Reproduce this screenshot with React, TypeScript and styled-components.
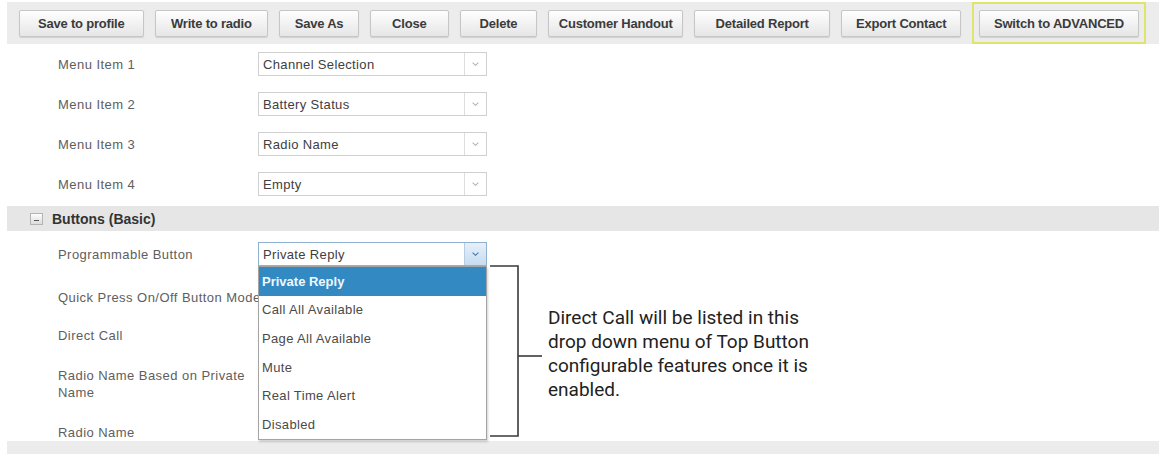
import styled, { createGlobalStyle } from "styled-components"

const GlobalStyle = createGlobalStyle`
    html, body {
        margin: 0;
        padding: 0;
        background: #fff;
    }
    body {
        font-family: "Liberation Sans", Arial, sans-serif;
        overflow: hidden;
    }
`

const toolButtons: [string, number][] = [
    ["Save to profile", 125],
    ["Write to radio", 114],
    ["Save As", 80],
    ["Close", 79],
    ["Delete", 78],
    ["Customer Handout", 135],
    ["Detailed Report", 137],
    ["Export Contact", 120],
]

const menuItems = [
    ["Menu Item 1", "Channel Selection"],
    ["Menu Item 2", "Battery Status"],
    ["Menu Item 3", "Radio Name"],
    ["Menu Item 4", "Empty"],
]

const buttonOptions = [
    "Private Reply",
    "Call All Available",
    "Page All Available",
    "Mute",
    "Real Time Alert",
    "Disabled",
]

const Chevron = ({ color }: { color: string }) => (
    <svg width="7" height="4" viewBox="0 0 7 4">
        <path d="M0.6 0.6 L3.5 3.3 L6.4 0.6" fill="none" stroke={color} strokeWidth="1.1" />
    </svg>
)

const Select = ({ value, open }: { value: string; open?: boolean }) => (
    <SelectBox $open={open}>
        <SelectValue>{value}</SelectValue>
        <ArrowBox $open={open}>
            <Chevron color={open ? "#4a76a6" : "#b5b5b5"} />
        </ArrowBox>
    </SelectBox>
)

const App = () => {
    return (
        <Page>
            <GlobalStyle />
            <Toolbar>
                {toolButtons.map(([label, w]) => (
                    <ToolButton key={label} $w={w}>
                        {label}
                    </ToolButton>
                ))}
                <Highlight>
                    <ToolButton $w={160}>Switch to ADVANCED</ToolButton>
                </Highlight>
            </Toolbar>

            <Rows>
                {menuItems.map(([label, value]) => (
                    <Row key={label} $h={40}>
                        <Label>{label}</Label>
                        <Select value={value} />
                    </Row>
                ))}
            </Rows>

            <SectionHeader>
                <Collapse>
                    <span />
                </Collapse>
                <SectionTitle>Buttons (Basic)</SectionTitle>
            </SectionHeader>

            <Rows>
                <Row $h={46}>
                    <Label>Programmable Button</Label>
                    <Field>
                        <Select value="Private Reply" open />
                        <OptionList>
                            {buttonOptions.map((opt, i) => (
                                <Option key={opt} $active={i === 0}>
                                    {opt}
                                </Option>
                            ))}
                        </OptionList>
                        <Bracket width="54" height="174" viewBox="0 0 54 174">
                            <path d="M0 1 H28 V171 H0" fill="none" stroke="#3a3a3a" strokeWidth="1.6" />
                            <path d="M28 91 H52" fill="none" stroke="#3a3a3a" strokeWidth="1.6" />
                        </Bracket>
                        <Callout>
                            Direct Call will be listed in this drop down menu of Top Button
                            configurable features once it is enabled.
                        </Callout>
                    </Field>
                </Row>
                <Row $h={40}>
                    <Label>Quick Press On/Off Button Mode</Label>
                </Row>
                <Row $h={36}>
                    <Label>Direct Call</Label>
                </Row>
                <Row $h={62}>
                    <Label>
                        Radio Name Based on Private
                        <br />
                        Name
                    </Label>
                </Row>
                <Row $h={26} $top={8}>
                    <Label>Radio Name</Label>
                </Row>
            </Rows>

            <FooterBand />
        </Page>
    )
}

export default App

const Page = styled.div`
    width: 1159px;
    height: 454px;
    box-sizing: border-box;
    padding: 2px 0 0 7px;
    display: flex;
    flex-direction: column;
`

const Toolbar = styled.div`
    height: 42px;
    display: flex;
    align-items: center;
    gap: 11px;
    padding: 0 13px 0 12px;
    background: #ececec;
`

const ToolButton = styled.button<{ $w: number }>`
    width: ${(p) => p.$w}px;
    height: 27px;
    padding: 0;
    border: 1px solid #c6c6c6;
    border-radius: 2px;
    background: linear-gradient(#fefefe, #e6e6e6);
    box-shadow: 0 1px 1px rgba(0, 0, 0, 0.12);
    font-family: "Liberation Sans", Arial, sans-serif;
    font-size: 13px;
    font-weight: bold;
    letter-spacing: -0.2px;
    color: #3b3b3b;
    white-space: nowrap;
    cursor: pointer;
`

const Highlight = styled.div`
    align-self: stretch;
    margin-left: auto;
    display: flex;
    align-items: center;
    padding: 0 5px;
    border: 2px solid #dfe46a;
`

const Rows = styled.div`
    display: flex;
    flex-direction: column;
`

const Row = styled.div<{ $h: number; $top?: number }>`
    height: ${(p) => p.$h}px;
    box-sizing: border-box;
    padding: ${(p) => p.$top ?? 0}px 0 0 51px;
    display: flex;
    align-items: center;
`

const Label = styled.div`
    width: 200px;
    flex-shrink: 0;
    font-size: 13px;
    letter-spacing: 0.45px;
    line-height: 17px;
    color: #5e5e5e;
    white-space: nowrap;
`

const Field = styled.div`
    position: relative;
`

const SelectBox = styled.div<{ $open?: boolean }>`
    width: 229px;
    height: 24px;
    box-sizing: border-box;
    display: flex;
    border: 1px solid ${(p) => (p.$open ? "#8fb0cf" : "#d0d0d0")};
    background: #fff;
`

const SelectValue = styled.div`
    flex: 1;
    display: flex;
    align-items: center;
    padding-left: 4px;
    font-size: 13px;
    letter-spacing: 0.35px;
    color: #404040;
`

const ArrowBox = styled.div<{ $open?: boolean }>`
    width: 21px;
    display: flex;
    align-items: center;
    justify-content: center;
    border-left: 1px solid ${(p) => (p.$open ? "#b7cde2" : "#dedede")};
    background: ${(p) => (p.$open ? "linear-gradient(#e6f0f9, #c6dcf0)" : "#fff")};
`

const OptionList = styled.div`
    position: absolute;
    top: 100%;
    left: 0;
    z-index: 2;
    width: 229px;
    box-sizing: border-box;
    border: 1px solid #a4a4a4;
    background: #fff;
    box-shadow: 1px 2px 2px rgba(0, 0, 0, 0.18);
`

const Option = styled.div<{ $active?: boolean }>`
    height: 28.6px;
    display: flex;
    align-items: center;
    padding-left: 3px;
    font-size: 13px;
    letter-spacing: ${(p) => (p.$active ? "0" : "0.35px")};
    font-weight: ${(p) => (p.$active ? "bold" : "normal")};
    color: ${(p) => (p.$active ? "#eef8ff" : "#4a4a4a")};
    background: ${(p) => (p.$active ? "#3389c1" : "transparent")};
`

const Bracket = styled.svg`
    position: absolute;
    left: 232px;
    top: 23px;
`

const Callout = styled.div`
    position: absolute;
    left: 290px;
    top: 64px;
    width: 292px;
    font-family: Roboto, "Liberation Sans", sans-serif;
    font-size: 19px;
    line-height: 24px;
    color: #222;
`

const SectionHeader = styled.div`
    margin-top: 2px;
    height: 25px;
    display: flex;
    align-items: center;
    padding-left: 23px;
    background: #e6e6e6;
`

const Collapse = styled.div`
    width: 13px;
    height: 12px;
    box-sizing: border-box;
    display: flex;
    align-items: center;
    justify-content: center;
    border: 1px solid #b4b4b4;
    background: linear-gradient(#fdfdfd, #dcdcdc);

    span {
        width: 5px;
        height: 1px;
        margin-top: 3px;
        background: #555;
    }
`

const SectionTitle = styled.div`
    margin-left: 9px;
    font-size: 14px;
    font-weight: bold;
    color: #333;
`

const FooterBand = styled.div`
    flex: 1;
    background: #ececec;
`
